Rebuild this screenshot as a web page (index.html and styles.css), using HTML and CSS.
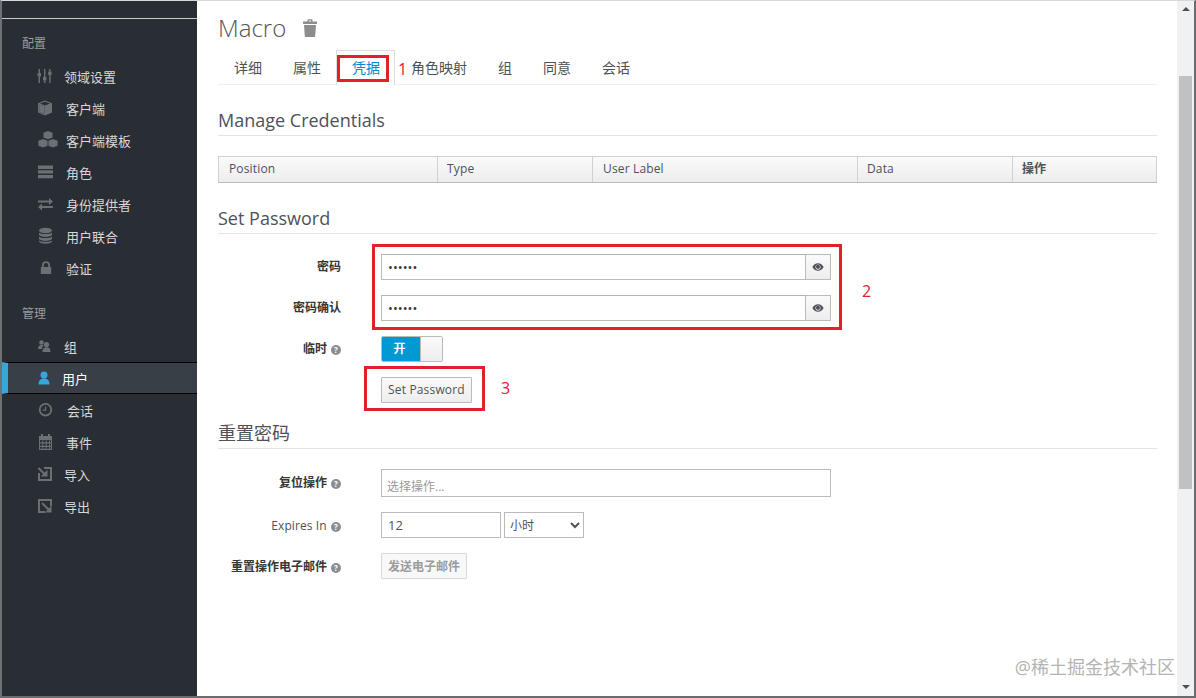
FILE: index.html
```html
<!DOCTYPE html>
<html lang="zh">
<head>
<meta charset="utf-8">
<title>Macro</title>
<link rel="stylesheet" href="styles.css">
</head>
<body>
<div class="frame">
  <aside class="sidebar">
    <div class="side-top"></div>
    <h2 class="side-label">配置</h2>
    <ul class="side-list">
      <li class="side-item"><svg class="ico" viewBox="0 0 18 18"><path d="M2.600 2h1.400v4H2.600zM2.600 9.500h1.400V16H2.600zM8 2h1.400v8H8zM8 13.500h1.400V16H8zM13.200 2h1.400v2.500h-1.400zM13.200 8h1.400v8h-1.400z"/><path d="M1.600 6h3.400v3.500H1.600zM7 10h3.400v3.500H7zM12.200 4.500h3.400V8h-3.400z"/></svg><span class="t0">领域设置</span></li>
      <li class="side-item"><svg class="ico" viewBox="0 0 18 18"><path fill-rule="evenodd" d="M9 1.500l7 2.700v9.400L9 16.500l-7-2.900V4.200zM4 4.500l5 2 5-2-5-1.800zM3.200 5.500v7.300l5.200 2.200V7.600z"/><path d="M3.200 5.500l5.200 2.100V15l-5.200-2.200z"/></svg><span class="t2">客户端</span></li>
      <li class="side-item wide"><svg class="ico" viewBox="0 0 20 18"><path d="M10 0l4.600 1.800v4.600L10 8.200 5.400 6.400V1.800zM5 8l4.600 1.800v5L5 16.600.4 14.800v-5zM15 8l4.600 1.800v5L15 16.600l-4.600-1.800v-5z"/></svg><span class="t2n">客户端模板</span></li>
      <li class="side-item"><svg class="ico" viewBox="0 0 18 18"><path d="M2 2.500h15v3.400H2zM2 7.200h15v3.400H2zM2 11.900h15v3.400H2z"/></svg><span class="t2">角色</span></li>
      <li class="side-item"><svg class="ico" viewBox="0 0 18 18"><path d="M2 5.500h11V3l4 3.500-4 3.500V7.500H2zM17 11H6V8.500L2 12l4 3.500V13h11z"/></svg><span class="t2">身份提供者</span></li>
      <li class="side-item"><svg class="ico" viewBox="0 0 18 18"><ellipse cx="9.500" cy="3.500" rx="6.500" ry="2.800"/><path d="M3 5.500c1 2 12 2 13 0v2.600c-1 2.400-12 2.400-13 0zM3 9.500c1 2 12 2 13 0v2.600c-1 2.400-12 2.400-13 0zM3 13.300c1 2 12 2 13 0v1.200c-1 3-12 3-13 0z"/></svg><span class="t2">用户联合</span></li>
      <li class="side-item"><svg class="ico" viewBox="0 0 18 18"><path d="M6 8V6.200a4 4 0 0 1 8 0V8h1.200v7H4.800V8zm1.800 0h4.400V6.200a2.200 2.200 0 0 0-4.400 0z"/></svg><span class="t2">验证</span></li>
    </ul>
    <h2 class="side-label second">管理</h2>
    <ul class="side-list">
      <li class="side-item"><svg class="ico" viewBox="0 0 18 18"><circle cx="5.500" cy="5.500" r="2.300"/><path d="M2 12c0-3 1.500-4 3.500-4 .8 0 1.400.1 2 .4-1 1-1.500 2-1.500 3.600z"/><circle cx="10.500" cy="7.500" r="2.600"/><path d="M6.500 15c0-3.500 1.500-4.800 4-4.800s4 1.300 4 4.800z"/></svg><span class="t0">组</span></li>
      <li class="side-item active"><svg class="ico" viewBox="0 0 18 18"><circle cx="8" cy="6" r="3.500"/><path d="M2.500 15.500c0-4 2-6 5.500-6s5.500 2 5.500 6z"/></svg><span class="tm">用户</span></li>
      <li class="side-item"><svg class="ico" viewBox="0 0 18 18"><path fill-rule="evenodd" d="M9.500 2a6.700 6.700 0 1 1 0 13.400A6.700 6.700 0 0 1 9.500 2zm0 1.800a4.900 4.900 0 1 0 0 9.800 4.900 4.900 0 0 0 0-9.800z"/><path d="M9 5.500h1.200v4.200H6.800V8.600H9z"/></svg><span class="t3">会话</span></li>
      <li class="side-item"><svg class="ico" viewBox="0 0 18 18"><path fill-rule="evenodd" d="M3 3h2V1h2v2h5V1h2v2h2v14H3zM4 7v2.300h2.400V7zm3.300 0v2.300h2.400V7zm3.300 0v2.300H13V7zM4 10.500v2.300h2.400v-2.300zm3.300 0v2.300h2.400v-2.300zm3.300 0v2.300H13v-2.300zM4 14v1.800h2.400V14zm3.300 0v1.800h2.400V14zm3.300 0v1.800H13V14zm3.300-7v2.300H15V7zm0 3.500v2.300H15v-2.300zm0 3.500v1.800H15V14z"/></svg><span class="t2">事件</span></li>
      <li class="side-item"><svg class="ico" viewBox="0 0 18 18"><path class="st" d="M8 3h7v12H3V8"/><path class="st" d="M2.500 3L9 9.500"/><path d="M11.500 11.500V4.800l-6.700 6.700z"/></svg><span class="t0">导入</span></li>
      <li class="side-item"><svg class="ico" viewBox="0 0 18 18"><path class="st" d="M15 9V3H3v12h6"/><path class="st" d="M6 6l6.500 6.500"/><path d="M15.500 15.500V8.800l-6.700 6.700z"/></svg><span class="t0">导出</span></li>
    </ul>
  </aside>

  <main class="main">
    <div class="title-row">
      <h1 class="title">Macro</h1>
      <svg class="trash" viewBox="0 0 16 18"><path d="M5.500 2.500V1.300C5.500.6 6 .2 6.600.2h2.800c.6 0 1.100.4 1.100 1.100v1.200h4.500V5H1V2.500zM7 1.400v1.100h2V1.400zM2 6h12l-.8 11c0 .6-.5 1-1 1H3.800c-.5 0-1-.4-1-1z"/></svg>
    </div>

    <ul class="tabs">
      <li class="tab">详细</li>
      <li class="tab">属性</li>
      <li class="tab tab-active">凭据</li>
      <li class="tab">角色映射</li>
      <li class="tab">组</li>
      <li class="tab">同意</li>
      <li class="tab">会话</li>
    </ul>

    <h2 class="section">Manage Credentials</h2>
    <div class="cred-table">
      <div class="th c1">Position</div>
      <div class="th c2">Type</div>
      <div class="th c3">User Label</div>
      <div class="th c4">Data</div>
      <div class="th c5">操作</div>
    </div>

    <h2 class="section">Set Password</h2>
    <form class="form">
      <label class="lbl raised">密码</label>
      <div class="input-group">
        <input class="field" type="password" value="123456">
        <button class="eye" type="button"><svg viewBox="0 0 16 12"><path fill-rule="evenodd" d="M8 1c3.200 0 6 2 7.500 5C14 9 11.200 11 8 11S2 9 .5 6C2 3 4.800 1 8 1zm0 1.500C6 2.500 4.500 4 4.500 6S6 9.500 8 9.500 11.500 8 11.500 6 10 2.500 8 2.500z"/><circle cx="8" cy="5.800" r="2.800"/></svg></button>
      </div>
      <label class="lbl raised">密码确认</label>
      <div class="input-group">
        <input class="field" type="password" value="123456">
        <button class="eye" type="button"><svg viewBox="0 0 16 12"><path fill-rule="evenodd" d="M8 1c3.200 0 6 2 7.500 5C14 9 11.200 11 8 11S2 9 .5 6C2 3 4.800 1 8 1zm0 1.500C6 2.500 4.500 4 4.500 6S6 9.500 8 9.500 11.500 8 11.500 6 10 2.500 8 2.500z"/><circle cx="8" cy="5.800" r="2.800"/></svg></button>
      </div>
      <label class="lbl raised">临时 <i class="help">?</i></label>
      <div class="switch"><span class="switch-on">开</span><span class="switch-handle"></span></div>
      <span></span>
      <div><button class="btn" type="button">Set Password</button></div>
    </form>

    <h2 class="section reset">重置密码</h2>
    <form class="form form-reset">
      <label class="lbl raised">复位操作 <i class="help">?</i></label>
      <div class="action-input">选择操作...</div>
      <label class="lbl light">Expires In <i class="help">?</i></label>
      <div class="expires">
        <input class="num" type="text" value="12">
        <select class="unit"><option>小时</option></select>
      </div>
      <label class="lbl">重置操作电子邮件 <i class="help">?</i></label>
      <div><button class="btn disabled" type="button">发送电子邮件</button></div>
    </form>
  </main>

  <div class="scrollbar">
    <span class="arrow up"></span>
    <span class="thumb"></span>
    <span class="arrow down"></span>
  </div>

  <div class="mark box1"></div>
  <div class="mark box2"></div>
  <div class="mark box3"></div>
  <span class="num-note n1">1</span>
  <span class="num-note n2">2</span>
  <span class="num-note n3">3</span>
  <span class="watermark">@稀土掘金技术社区</span>
</div>
</body>
</html>
```

FILE: styles.css
```css
* { box-sizing: border-box; }
html, body { margin: 0; height: 100%; }
body {
  width: 1196px;
  height: 698px;
  overflow: hidden;
  background: #fff;
  font-family: "Open Sans", "Noto Sans CJK SC", sans-serif;
  font-size: 12px;
  color: #363636;
}
ul { list-style: none; margin: 0; padding: 0; }
h1, h2 { margin: 0; font-weight: 400; }

.frame {
  position: relative;
  display: flex;
  width: 1196px;
  height: 698px;
  border-left: 2px solid #6e7276;
  border-right: 2px solid #6a6c6e;
  border-bottom: 2px solid #6a6c6e;
  border-top: 1px solid #d8d8d8;
}

/* sidebar */
.sidebar {
  width: 195px;
  flex: none;
  background: #292e34;
  color: #d8d8d8;
}
.side-top { height: 18px; border-bottom: 1px solid #c8cacc; }
.side-label {
  height: 20px;
  margin: 15px 0 6px 20px;
  font-size: 12px;
  line-height: 20px;
  color: #9a9c9e;
}
.side-label.second { margin-top: 20px; }
.side-item {
  display: flex;
  align-items: center;
  height: 32px;
  padding-left: 34px;
  font-size: 13px;
}
.ico { width: 18px; height: 18px; flex: none; fill: #6c7074; }
.ico .st { fill: none; stroke: #6c7074; stroke-width: 2; }
.wide .ico { width: 20px; margin-left: 2px; margin-right: -2px; }
.t0 { margin-left: 10px; }
.t2 { margin-left: 12px; }
.t2n { margin-left: 10px; }
.t3 { margin-left: 13px; }
.tm { margin-left: 8px; color: #fff; }
.active {
  background: #393f46;
  border-top: 1px solid #030303;
  border-bottom: 1px solid #030303;
  border-left: 6px solid #39a5dc;
  padding-left: 28px;
}
.active .ico { fill: #39a5dc; }

/* main */
.main {
  width: 980px;
  flex: none;
  padding: 0 20px 0 21px;
  background: #fff;
}
.title-row { display: flex; align-items: center; height: 49px; padding-top: 4px; }
.title { font-size: 24px; font-weight: 300; color: #555; line-height: 44px; }
.trash { width: 16px; height: 18px; margin-left: 16px; fill: #8b8d8f; }

.tabs {
  display: flex;
  height: 35px;
  border-bottom: 1px solid #eee;
}
.tab {
  height: 35px;
  padding: 0 14px 0 15px;
  border: 1px solid transparent;
  border-bottom: 0;
  font-size: 14px;
  line-height: 33px;
  color: #4d5258;
}
.tab-active {
  background: #fff;
  border-color: #ddd;
  color: #0088ce;
}

.section {
  height: 32px;
  margin-top: 19px;
  border-bottom: 1px solid #e4e4e4;
  font-size: 18px;
  line-height: 32px;
  color: #4d5258;
}
.section.reset { margin-top: 14px; }

.cred-table {
  display: grid;
  grid-template-columns: 218px 155px 265px 155px 1fr;
  height: 27px;
  margin-top: 20px;
  border: 1px solid #d1d1d1;
  border-bottom-color: #bbb;
  background: linear-gradient(#fafafa, #ededed);
}
.th {
  padding-left: 10px;
  border-left: 1px solid #d1d1d1;
  font-size: 12px;
  letter-spacing: .15px;
  line-height: 23px;
  color: #4d5258;
}
.th.c1 { border-left: 0; }
.th.c2, .th.c4, .th.c5 { padding-left: 9px; }
.c5 { font-weight: 700; letter-spacing: 0; }

.form {
  display: grid;
  grid-template-columns: 123px 450px;
  column-gap: 40px;
  row-gap: 15px;
  margin-top: 20px;
  align-items: center;
}
.lbl {
  display: block;
  text-align: right;
  font-size: 12px;
  font-weight: 700;
  color: #363636;
}
.lbl.light { font-weight: 400; color: #4d5258; letter-spacing: .1px; }
.lbl.raised { margin-bottom: 2px; }
.help {
  display: inline-block;
  width: 10px;
  height: 10px;
  margin-left: 1px;
  border-radius: 50%;
  background: #8b8d8f;
  color: #fff;
  font-size: 8px;
  font-style: normal;
  font-weight: 700;
  line-height: 10px;
  text-align: center;
  vertical-align: 0;
}
.input-group { display: flex; height: 26px; }
.field {
  width: 425px;
  height: 26px;
  padding: 0 6px;
  border: 1px solid #bbb;
  border-top-color: #aeb4b8;
  font-family: inherit;
  font-size: 13px;
  color: #363636;
  background: #fff;
}
.eye {
  display: flex;
  align-items: center;
  justify-content: center;
  width: 25px;
  height: 26px;
  padding: 0;
  border: 1px solid #bbb;
  border-left: 0;
  background: linear-gradient(#fafafa, #ededed);
}
.eye svg { width: 12px; height: 10px; fill: #4d5258; }
.switch {
  display: flex;
  width: 62px;
  height: 26px;
  border: 1px solid #bbb;
  border-radius: 2px;
  overflow: hidden;
}
.switch-on {
  width: 38px;
  background: #0099d3;
  color: #fff;
  font-size: 12px;
  font-weight: 700;
  line-height: 24px;
  text-align: center;
  padding-right: 3px;
}
.switch-handle {
  flex: 1;
  border-left: 1px solid #bbb;
  background: linear-gradient(#fafafa, #ededed);
}
.btn {
  display: block;
  height: 26px;
  padding: 0 6px 2px;
  border: 1px solid #bbb;
  border-radius: 1px;
  background: linear-gradient(#fafafa, #ededed);
  font-family: inherit;
  font-size: 12px;
  letter-spacing: .17px;
  color: #4d5258;
}
.btn.disabled {
  padding-bottom: 0;
  letter-spacing: 0;
  background: #f8f8f8;
  border-color: #d8d8d8;
  color: #9a9c9e;
  font-weight: 700;
}
.form-reset { margin-top: 20px; }
.action-input {
  width: 450px;
  height: 28px;
  padding: 7px 5px 0;
  border: 1px solid #bbb;
  font-size: 12px;
  line-height: 20px;
  color: #999;
}
.expires { display: flex; gap: 3px; }
.num {
  width: 120px;
  height: 26px;
  padding: 0 6px;
  border: 1px solid #bbb;
  font-family: inherit;
  font-size: 13px;
  color: #4d5258;
}
.unit {
  width: 80px;
  height: 26px;
  padding: 0 1px;
  border: 1px solid #bbb;
  border-radius: 0;
  background: #fff;
  font-family: inherit;
  font-size: 12px;
  color: #4d5258;
}

/* scrollbar */
.scrollbar {
  position: relative;
  width: 17px;
  flex: none;
  background: #f1f1f1;
}
.thumb { position: absolute; left: 2px; top: 75px; width: 13px; height: 413px; background: #c1c1c1; }
.arrow { position: absolute; left: 5px; width: 0; height: 0; border-left: 4px solid transparent; border-right: 4px solid transparent; }
.arrow.up { top: 6px; border-bottom: 4px solid #505050; }
.arrow.down { bottom: 7px; border-top: 4px solid #505050; }

/* annotations over the screenshot */
.mark { position: absolute; border: 3px solid #e0202c; }
.box1 { left: 335px; top: 54px; width: 52px; height: 27px; }
.box2 { left: 370px; top: 243px; width: 470px; height: 86px; }
.box3 { left: 362px; top: 365px; width: 121px; height: 45px; }
.num-note { position: absolute; font-family: "Open Sans", sans-serif; font-size: 16px; line-height: 20px; color: #e0202c; }
.n1 { left: 396px; top: 58px; }
.n2 { left: 860px; top: 280px; }
.n3 { left: 499px; top: 377px; }
.watermark {
  position: absolute;
  right: 19px;
  top: 654px;
  font-size: 18px;
  line-height: 24px;
  color: #b4b4b4;
}
```
